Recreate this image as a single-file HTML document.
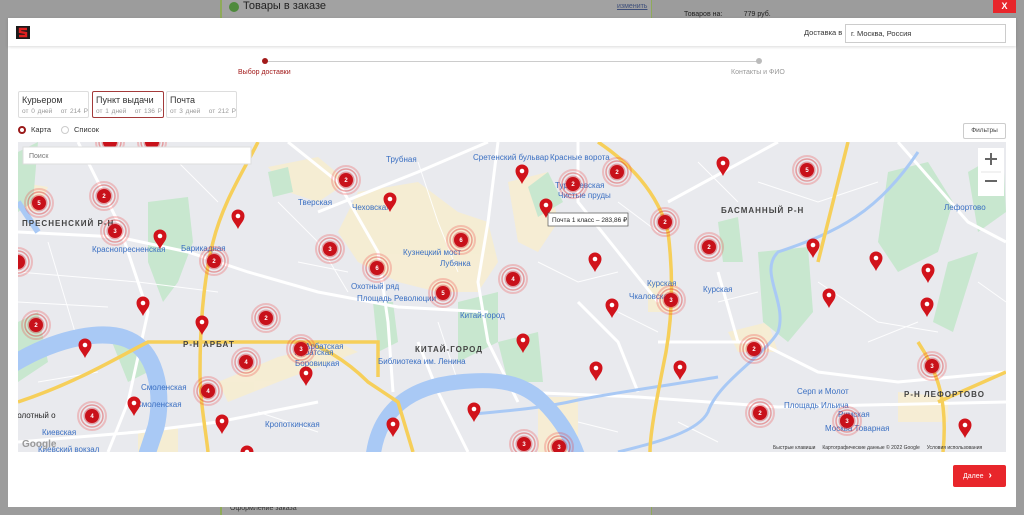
<!DOCTYPE html>
<html><head><meta charset="utf-8">
<style>
*{margin:0;padding:0;box-sizing:border-box}
body{width:1024px;height:515px;overflow:hidden;background:#9c9c9c;font-family:"Liberation Sans",Arial,sans-serif;position:relative}
.abs{position:absolute}
.modal{left:8px;top:18px;width:1008px;height:489px;background:#fff}
.hdr{left:0;top:0;width:1008px;height:28px;background:#fff;box-shadow:0 1px 3px rgba(0,0,0,.15)}
.tab{position:absolute;top:73px;height:27px;border:1px solid #ddd;border-radius:2px;background:#fff;padding:3px 3px}
.tab b{display:block;font-weight:normal;font-size:9px;color:#333;line-height:11px}
.tab i{display:block;font-style:normal;font-size:6.5px;color:#999;margin-top:2px;white-space:nowrap;word-spacing:1px}
.lbl{font-family:"Liberation Sans",sans-serif;font-size:8px;fill:#3a6fc2}
.dst{font-family:"Liberation Sans",sans-serif;font-size:8px;fill:#444;letter-spacing:1px;font-weight:bold}
.cn{font-size:6px;fill:#fff;font-weight:bold;text-anchor:middle;font-family:"Liberation Sans",sans-serif}
</style></head><body>
<div class="abs" style="left:220px;top:0;width:432px;height:515px;background:#a2a2a2;border-left:2px solid #8faa5a;border-right:1px solid #8faa5a"></div>
<div class="abs" style="left:229px;top:2px;width:10px;height:10px;border-radius:50%;background:#4e8a3c"></div>
<div class="abs" style="left:243px;top:0px;font-size:11px;color:#222">Товары в заказе</div>
<div class="abs" style="left:617px;top:3px;font-size:7px;color:#3e4f7a;text-decoration:underline">изменить</div>
<div class="abs" style="left:684px;top:11px;font-size:7px;color:#222">Товаров на: &nbsp; &nbsp; &nbsp; &nbsp; &nbsp; 779 руб.</div>
<div class="abs" style="left:993px;top:0;width:23px;height:13px;background:#e8262b;color:#fff;font-size:9px;font-weight:bold;text-align:center;line-height:13px">X</div>
<div class="abs" style="left:230px;top:505px;font-size:7px;color:#333">Оформление заказа</div>

<div class="abs modal">
 <div class="abs hdr">
  <div class="abs" style="left:8px;top:8px;width:14px;height:13px;background:#1a1a1a"><svg width="14" height="13"><path d="M11 3 L4 3 L4 6 L10 7 L10 10 L3 10" stroke="#e02020" stroke-width="2.4" fill="none"/></svg></div>
  <div class="abs" style="left:796px;top:10px;font-size:7.5px;color:#333">Доставка в</div>
  <div class="abs" style="left:837px;top:6px;width:161px;height:19px;border:1px solid #ccc;font-size:7.5px;color:#333;padding:4px 5px">г. Москва, Россия</div>
 </div>
 <div class="abs" style="left:259px;top:43px;width:492px;height:1px;background:#ccc"></div>
 <div class="abs" style="left:254px;top:40px;width:6px;height:6px;border-radius:50%;background:#a21a1a"></div>
 <div class="abs" style="left:748px;top:40px;width:6px;height:6px;border-radius:50%;background:#bbb"></div>
 <div class="abs" style="left:230px;top:51px;font-size:7px;color:#a21a1a">Выбор доставки</div>
 <div class="abs" style="left:723px;top:51px;font-size:7px;color:#999">Контакты и ФИО</div>

 <div class="tab" style="left:10px;width:71px"><b>Курьером</b><i>от 0 дней &nbsp; от 214 Р</i></div>
 <div class="tab" style="left:84px;width:72px;border-color:#a33a3a"><b>Пункт выдачи</b><i>от 1 дней &nbsp; от 136 Р</i></div>
 <div class="tab" style="left:158px;width:71px"><b>Почта</b><i>от 3 дней &nbsp; от 212 Р</i></div>

 <div class="abs" style="left:10px;top:108px;width:8px;height:8px;border-radius:50%;border:2.5px solid #9a1a1a"></div>
 <div class="abs" style="left:23px;top:107px;font-size:7.5px;color:#333">Карта</div>
 <div class="abs" style="left:53px;top:108px;width:8px;height:8px;border-radius:50%;border:1px solid #ccc"></div>
 <div class="abs" style="left:66px;top:107px;font-size:7.5px;color:#333">Список</div>
 <div class="abs" style="left:955px;top:105px;width:43px;height:16px;border:1px solid #ccc;border-radius:2px;font-size:6.5px;color:#444;text-align:center;line-height:14px">Фильтры</div>

 <div class="abs" style="left:945px;top:447px;width:53px;height:22px;background:#e8262b;border-radius:2px;color:#fff;font-size:7px;line-height:22px;padding-left:10px">Далее <span style="font-size:10px;font-weight:bold;margin-left:3px">›</span></div>
</div>

<svg class="abs" style="left:18px;top:142px" width="988" height="310" viewBox="0 0 988 310">
<defs>
 <g id="pin"><path d="M0,13 C-2,8 -6.5,5 -6.5,0 A6.5,6.5 0 1 1 6.5,0 C6.5,5 2,8 0,13Z" fill="#d1131b"/><circle r="2.3" fill="#fff"/></g>
 <g id="cl"><circle r="14" fill="none" stroke="#e33" stroke-opacity=".25" stroke-width="2"/><circle r="11" fill="none" stroke="#d22" stroke-opacity=".4" stroke-width="1.5"/><circle r="8.5" fill="#d1131b" fill-opacity=".35"/><circle r="7" fill="#c8111a"/></g>
</defs>
<rect width="988" height="310" fill="#e9eaee"/>
<g fill="#f9eecb" opacity=".75">
 <path d="M250 25 L300 15 L330 40 L300 60 L270 50Z"/>
 <path d="M340 50 L400 40 L440 70 L470 80 L480 120 L460 150 L420 150 L380 140 L340 120 L320 90Z"/>
 <path d="M490 40 L530 30 L540 80 L520 110 L500 100Z"/>
 <path d="M200 240 L260 215 L320 200 L340 210 L260 240 L210 260Z"/>
 <path d="M0 40 L30 45 L20 70 L0 65Z"/>
 <path d="M710 190 L750 180 L760 210 L720 210Z"/>
 <path d="M520 255 L560 255 L560 310 L520 310Z"/>
 <path d="M880 250 L930 255 L930 280 L880 280Z"/>
 <path d="M120 290 L160 285 L160 310 L120 310Z"/>
 <path d="M630 140 L660 140 L660 170 L630 170Z"/>
</g>
<g fill="#c8e7cf">
 <path d="M130 60 L170 55 L175 100 L160 140 L145 160 L130 120Z"/>
 <path d="M0 180 L20 170 L30 220 L0 240Z"/>
 <path d="M250 30 L270 25 L275 50 L255 55Z"/>
 <path d="M355 160 L375 160 L380 200 L360 210Z"/>
 <path d="M510 45 L530 30 L545 60 L520 75Z"/>
 <path d="M700 80 L720 75 L725 120 L705 120Z"/>
 <path d="M870 30 L910 20 L935 60 L920 110 L880 130 L860 100Z"/>
 <path d="M950 30 L985 10 L988 70 L960 90Z"/>
 <path d="M930 120 L960 110 L935 190 L915 180Z"/>
 <path d="M740 110 L790 105 L795 170 L770 200 L745 180Z"/>
 <path d="M440 160 L480 150 L480 200 L440 220Z"/>
 <path d="M480 200 L520 190 L525 240 L490 240Z"/>
 <path d="M0 10 L20 0 L15 60 L0 70Z"/>
 <path d="M90 190 L110 190 L130 230 L110 240Z"/>
</g>
<g stroke="#fff" stroke-width="1" fill="none" opacity=".9">
 <path d="M0 130 L120 140 L200 150 M0 160 L90 165 M30 100 L60 200 M160 20 L200 60 M260 60 L300 100 L330 150 M400 20 L420 80 L440 130 M520 120 L560 140 L600 130 M600 60 L640 90 M680 20 L720 60 M740 40 L800 60 L860 40 M800 140 L860 180 L920 190 M700 160 L740 150 M560 280 L600 290 M660 280 L700 300 M240 270 L300 290 M20 240 L80 230 M420 180 L440 240 M280 120 L330 130 M850 200 L900 180 M960 140 L988 160 M600 170 L640 190"/>
</g>
<g stroke="#fff" stroke-width="3" fill="none">
 <path d="M0 90 L100 95 L170 110 L230 130 L300 150 L380 165 L470 170"/>
 <path d="M60 0 L100 80 L130 170 L110 260 L90 310"/>
 <path d="M270 0 L320 40 L360 110 L370 180 L375 250"/>
 <path d="M300 70 L400 30 L470 0"/>
 <path d="M480 0 L470 80 L460 140 L470 200 L500 260"/>
 <path d="M560 0 L560 60 L600 110 L640 160"/>
 <path d="M650 60 L760 0"/>
 <path d="M640 200 L740 200 L800 230 L880 240 L988 230"/>
 <path d="M500 250 L620 255 L760 265 L988 260"/>
 <path d="M0 300 L120 290 L200 280 L300 260"/>
 <path d="M880 0 L950 80 L988 100"/>
 <path d="M400 200 L420 250 L450 310"/>
 <path d="M560 160 L600 200 L620 250"/>
 <path d="M700 130 L720 200"/>
</g>
<g fill="none" stroke="#a9c9f5">
 <path d="M-5 222 C40 195 90 185 115 200 C140 215 145 255 138 285 L128 315" stroke-width="17"/>
 <path d="M355 315 C360 270 390 245 440 240 C480 236 505 240 525 260 C545 280 555 300 560 315" stroke-width="15"/>
 <path d="M455 272 C500 268 530 265 560 258 C600 250 640 245 700 235" stroke-width="3"/>
 <path d="M600 310 C640 300 680 290 690 270 C700 240 745 215 760 190 C770 160 740 130 760 110 C820 90 860 70 900 10" stroke-width="3"/>
 <path d="M0 60 L20 90" stroke-width="6"/>
</g>
<g fill="none" stroke="#f6cf5a" stroke-width="3.5">
 <path d="M240 0 C225 30 205 60 195 100 C185 140 182 190 182 230 C182 260 188 290 190 310"/>
 <path d="M580 0 C610 20 640 50 650 90 C655 130 655 170 648 210 C640 250 632 290 632 310"/>
 <path d="M0 260 C60 240 100 215 130 200 L360 200 L360 235"/>
 <path d="M280 200 C300 200 330 220 350 240 L380 260 L395 310"/>
 <path d="M830 0 C820 40 810 80 800 120"/>
 <path d="M900 200 C920 230 930 260 925 310"/>
 <path d="M920 260 L988 230"/>
</g>
<text class="dst" x="4" y="84">ПРЕСНЕНСКИЙ Р-Н</text>
<text class="dst" x="165" y="205">Р-Н АРБАТ</text>
<text class="dst" x="397" y="210">КИТАЙ-ГОРОД</text>
<text class="dst" x="703" y="71">БАСМАННЫЙ Р-Н</text>
<text class="dst" x="886" y="255">Р-Н ЛЕФОРТОВО</text>
<g class="lbl">
<text x="74" y="110">Краснопресненская</text>
<text x="163" y="109">Барикадная</text>
<text x="280" y="63">Тверская</text>
<text x="334" y="68">Чеховская</text>
<text x="368" y="20">Трубная</text>
<text x="385" y="113">Кузнецкий мост</text>
<text x="422" y="124">Лубянка</text>
<text x="333" y="147">Охотный ряд</text>
<text x="339" y="159">Площадь Революции</text>
<text x="442" y="176">Китай-город</text>
<text x="287" y="207">Арбатская</text>
<text x="277" y="213">Арбатская</text>
<text x="277" y="224">Боровицкая</text>
<text x="360" y="222">Библиотека им. Ленина</text>
<text x="123" y="248">Смоленская</text>
<text x="118" y="265">Смоленская</text>
<text x="247" y="285">Кропоткинская</text>
<text x="24" y="293">Киевская</text>
<text x="20" y="310">Киевский вокзал</text>
<text x="455" y="18">Сретенский бульвар</text>
<text x="532" y="18">Красные ворота</text>
<text x="537" y="46">Тургеневская</text>
<text x="540" y="56">Чистые пруды</text>
<text x="629" y="144">Курская</text>
<text x="685" y="150">Курская</text>
<text x="611" y="157">Чкаловская</text>
<text x="779" y="252">Серп и Молот</text>
<text x="766" y="266">Площадь Ильича</text>
<text x="820" y="275">Римская</text>
<text x="807" y="289">Москва Товарная</text>
<text x="926" y="68">Лефортово</text>
</g>
<text x="-6" y="276" font-size="8" fill="#222" font-family="Liberation Sans">Болотный о</text>
<text x="4" y="305" font-size="10" fill="#999" font-family="Liberation Sans" font-weight="bold">Google</text>
<text x="755" y="307" font-size="5" fill="#333" font-family="Liberation Sans">Быстрые клавиши &nbsp; &nbsp; Картографические данные © 2022 Google &nbsp; &nbsp; Условия использования</text>
<g>
<use href="#pin" x="142" y="94"/><use href="#pin" x="220" y="74"/><use href="#pin" x="372" y="57"/>
<use href="#pin" x="125" y="161"/><use href="#pin" x="184" y="180"/><use href="#pin" x="67" y="203"/>
<use href="#pin" x="116" y="261"/><use href="#pin" x="204" y="279"/><use href="#pin" x="288" y="231"/>
<use href="#pin" x="375" y="282"/><use href="#pin" x="456" y="267"/><use href="#pin" x="505" y="198"/>
<use href="#pin" x="528" y="63"/><use href="#pin" x="504" y="29"/><use href="#pin" x="577" y="117"/>
<use href="#pin" x="594" y="163"/><use href="#pin" x="578" y="226"/><use href="#pin" x="662" y="225"/>
<use href="#pin" x="705" y="21"/><use href="#pin" x="795" y="103"/><use href="#pin" x="811" y="153"/>
<use href="#pin" x="910" y="128"/><use href="#pin" x="909" y="162"/><use href="#pin" x="947" y="283"/>
<use href="#pin" x="858" y="116"/><use href="#pin" x="229" y="310"/>
</g>
<g>
<use href="#cl" x="21" y="61"/><text class="cn" x="21" y="63">5</text>
<use href="#cl" x="86" y="54"/><text class="cn" x="86" y="56">2</text>
<use href="#cl" x="97" y="89"/><text class="cn" x="97" y="91">3</text>
<use href="#cl" x="196" y="119"/><text class="cn" x="196" y="121">2</text>
<use href="#cl" x="18" y="183"/><text class="cn" x="18" y="185">2</text>
<use href="#cl" x="248" y="176"/><text class="cn" x="248" y="178">2</text>
<use href="#cl" x="312" y="107"/><text class="cn" x="312" y="109">3</text>
<use href="#cl" x="328" y="38"/><text class="cn" x="328" y="40">2</text>
<use href="#cl" x="359" y="126"/><text class="cn" x="359" y="128">6</text>
<use href="#cl" x="443" y="98"/><text class="cn" x="443" y="100">6</text>
<use href="#cl" x="425" y="151"/><text class="cn" x="425" y="153">5</text>
<use href="#cl" x="495" y="137"/><text class="cn" x="495" y="139">4</text>
<use href="#cl" x="283" y="207"/><text class="cn" x="283" y="209">3</text>
<use href="#cl" x="228" y="220"/><text class="cn" x="228" y="222">4</text>
<use href="#cl" x="190" y="249"/><text class="cn" x="190" y="251">4</text>
<use href="#cl" x="74" y="274"/><text class="cn" x="74" y="276">4</text>
<use href="#cl" x="555" y="42"/><text class="cn" x="555" y="44">2</text>
<use href="#cl" x="599" y="30"/><text class="cn" x="599" y="32">2</text>
<use href="#cl" x="647" y="80"/><text class="cn" x="647" y="82">2</text>
<use href="#cl" x="691" y="105"/><text class="cn" x="691" y="107">2</text>
<use href="#cl" x="653" y="158"/><text class="cn" x="653" y="160">3</text>
<use href="#cl" x="736" y="207"/><text class="cn" x="736" y="209">2</text>
<use href="#cl" x="789" y="28"/><text class="cn" x="789" y="30">5</text>
<use href="#cl" x="742" y="271"/><text class="cn" x="742" y="273">2</text>
<use href="#cl" x="829" y="279"/><text class="cn" x="829" y="281">3</text>
<use href="#cl" x="914" y="224"/><text class="cn" x="914" y="226">3</text>
<use href="#cl" x="506" y="302"/><text class="cn" x="506" y="304">3</text>
<use href="#cl" x="541" y="305"/><text class="cn" x="541" y="307">3</text>
<use href="#cl" x="0" y="120"/>
<use href="#cl" x="92" y="0"/><use href="#cl" x="134" y="0"/>
</g>
<rect x="5" y="5" width="228" height="17" fill="#fff" stroke="#ddd"/>
<text x="11" y="16" font-size="7" fill="#777" font-family="Liberation Sans">Поиск</text>
<rect x="530" y="71" width="80" height="13" fill="#fff" stroke="#555" stroke-width=".7"/>
<text x="534" y="80" font-size="6.5" fill="#222" font-family="Liberation Sans">Почта 1 класс – 283,86 ₽</text>
<rect x="960" y="6" width="26" height="48" fill="#fff"/>
<line x1="963" y1="30" x2="983" y2="30" stroke="#e6e6e6"/>
<path d="M967 17 H979 M973 11 V23 M967 39 H979" stroke="#666" stroke-width="2"/>
</svg>
</body></html>
